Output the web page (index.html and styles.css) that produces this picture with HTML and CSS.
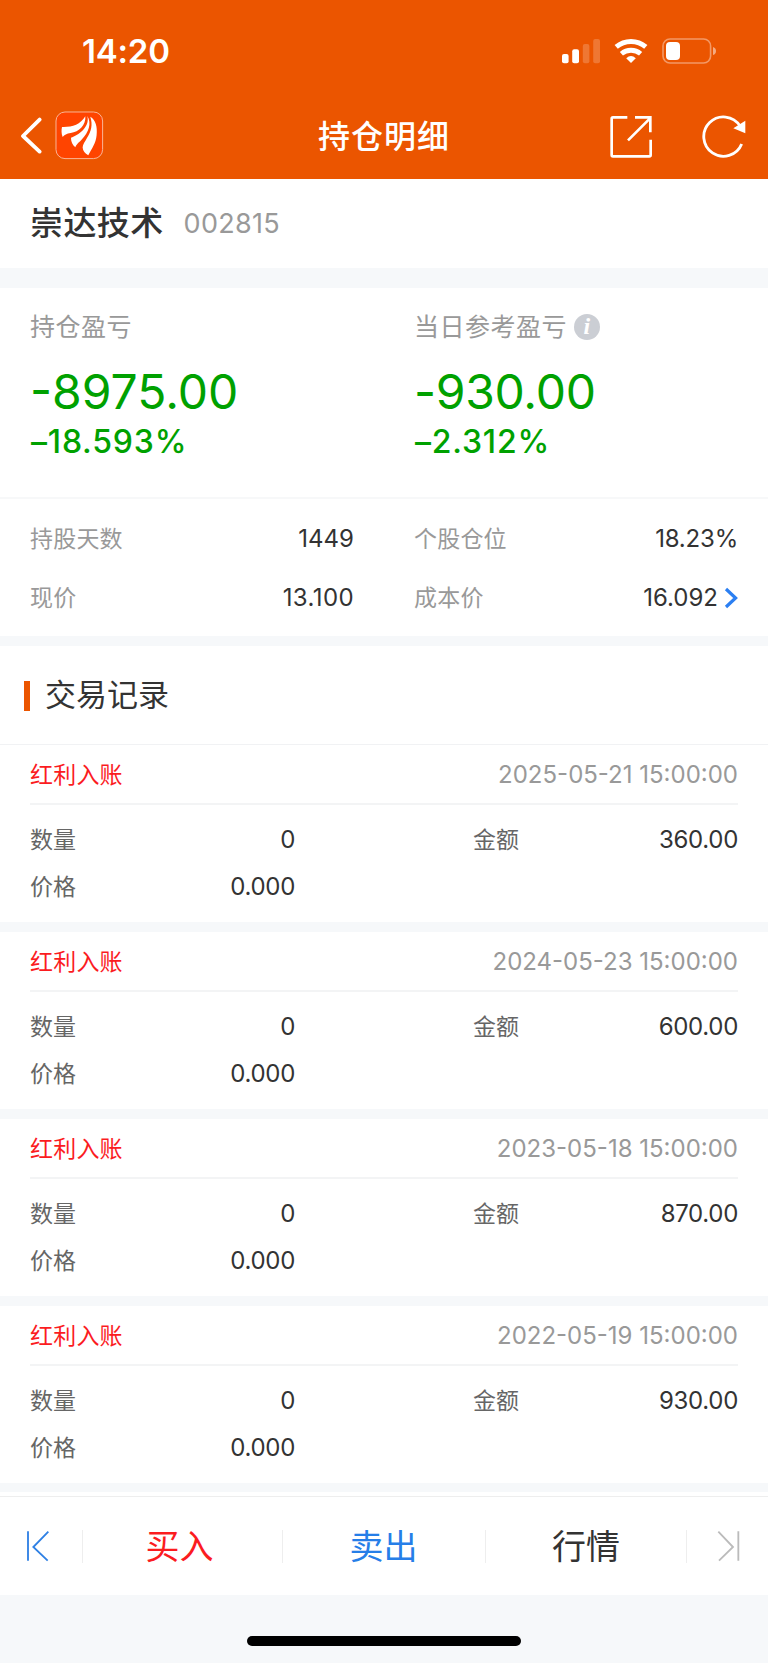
FILE: index.html
```html
<!DOCTYPE html>
<html lang="zh-CN">
<head>
<meta charset="utf-8">
<title>持仓明细</title>
<link rel="stylesheet" href="styles.css">
</head>
<body>
<div class="screen">
  <header class="header">
    <div class="status">
      <span class="time">14:20</span>
      <svg class="status-icons" viewBox="562 36 156 30" width="156" height="30" fill="#fff">
        <rect x="562" y="54" width="6.6" height="9.2" rx="2"/>
        <rect x="572.2" y="49.2" width="6.8" height="14" rx="2"/>
        <rect x="582.8" y="44" width="6.6" height="19.2" rx="2" opacity=".2"/>
        <rect x="593.2" y="39" width="6.8" height="24.2" rx="2" opacity=".2"/>
        <path d="M616.2 46.9A22.9 22.9 0 0 1 645.8 46.9" fill="none" stroke="#fff" stroke-width="5"/>
        <path d="M621.4 53.8A14.7 14.7 0 0 1 640.6 53.8" fill="none" stroke="#fff" stroke-width="4.8"/>
        <path d="M626.2 58.3Q631 53.5 635.8 58.3L631 63.1Z"/>
        <rect x="663" y="39" width="47.6" height="24" rx="7" fill="none" stroke="#fff" stroke-width="1.6" opacity=".4"/>
        <rect x="666" y="42" width="14" height="18" rx="4"/>
        <path d="M713 47v8q3-1 3-4t-3-4Z" opacity=".5"/>
      </svg>
    </div>
    <nav class="nav">
      <div class="nav-side">
        <svg class="back" viewBox="0 0 22 38" width="22" height="38"><path d="M19.6 2.6L3 19l16.6 15.6" fill="none" stroke="#fff" stroke-width="3.8" stroke-linecap="round" stroke-linejoin="round"/></svg>
        <svg class="logo" viewBox="166 333 146 146" width="48.6" height="48.6">
          <rect x="169" y="336" width="140" height="140" rx="27" fill="#ff4400" stroke="#fbb496" stroke-width="3"/>
          <g fill="#fff">
            <path d="M187 381C216 382 242 375 257 349C260 374 238 397 213 399C201 401 194 405 189 411C185 402 185 389 187 381Z"/>
            <path d="M263 348C271 375 246 402 214 413C214 425 219 436 227 442C232 430 240 427 247 418C267 397 277 370 263 348Z"/>
            <path d="M272 350C288 359 294 380 291 406C289 430 277 445 266 466C256 461 250 454 249 443C249 433 257 424 262 414C275 394 280 374 272 350Z"/>
          </g>
        </svg>
      </div>
      <h1 class="nav-title">持仓明细</h1>
      <div class="nav-side nav-right">
        <svg viewBox="675 342 132 135" width="44" height="45" fill="none" stroke="#fff" stroke-width="8">
          <path d="M730 352H687q-4 0-4 4V465q0 4 4 4H796q4 0 4-4V419M753 352H799V397M732 421L798 355"/>
        </svg>
        <svg viewBox="951 342 138 135" width="46" height="45">
          <path d="M1073 432A59 59 0 1 1 1068 378" fill="none" stroke="#fff" stroke-width="8.5"/>
          <path d="M1084 362V400L1048 385Z" fill="#fff"/>
        </svg>
      </div>
    </nav>
  </header>

  <section class="stock"><h2 class="stock-name">崇达技术</h2><span class="stock-code">002815</span></section>

  <section class="summary">
    <div class="pl">
      <div class="pl-label">持仓盈亏</div>
      <div class="pl-value">-8975.00</div>
      <div class="pl-rate">–18.593%</div>
    </div>
    <div class="pl">
      <div class="pl-label">当日参考盈亏<span class="info">i</span></div>
      <div class="pl-value today">-930.00</div>
      <div class="pl-rate">–2.312%</div>
    </div>
  </section>

  <section class="stats">
    <div class="stat"><span class="stat-label">持股天数</span><span class="num">1449</span></div>
    <div class="stat"><span class="stat-label">个股仓位</span><span class="num percent">18.23%</span></div>
    <div class="stat"><span class="stat-label">现价</span><span class="num price">13.100</span></div>
    <div class="stat"><span class="stat-label">成本价</span><span class="num cost">16.092<svg viewBox="0 0 14 22" width="14" height="22"><path d="M2 2l9.6 9L2 20" fill="none" stroke="#2b7ff2" stroke-width="3.2"/></svg></span></div>
  </section>

  <h2 class="section-title">交易记录</h2>

  <main class="records">
    <article class="record">
      <div class="record-head"><span class="type">红利入账</span><time class="date">2025-05-21 15:00:00</time></div>
      <div class="record-body">
        <div class="cell"><span>数量</span><span class="num">0</span></div><div class="cell"><span>金额</span><span class="num">360.00</span></div>
        <div class="cell"><span>价格</span><span class="num">0.000</span></div>
      </div>
    </article>
    <article class="record">
      <div class="record-head"><span class="type">红利入账</span><time class="date">2024-05-23 15:00:00</time></div>
      <div class="record-body">
        <div class="cell"><span>数量</span><span class="num">0</span></div><div class="cell"><span>金额</span><span class="num">600.00</span></div>
        <div class="cell"><span>价格</span><span class="num">0.000</span></div>
      </div>
    </article>
    <article class="record">
      <div class="record-head"><span class="type">红利入账</span><time class="date">2023-05-18 15:00:00</time></div>
      <div class="record-body">
        <div class="cell"><span>数量</span><span class="num">0</span></div><div class="cell"><span>金额</span><span class="num">870.00</span></div>
        <div class="cell"><span>价格</span><span class="num">0.000</span></div>
      </div>
    </article>
    <article class="record">
      <div class="record-head"><span class="type">红利入账</span><time class="date">2022-05-19 15:00:00</time></div>
      <div class="record-body">
        <div class="cell"><span>数量</span><span class="num">0</span></div><div class="cell"><span>金额</span><span class="num">930.00</span></div>
        <div class="cell"><span>价格</span><span class="num">0.000</span></div>
      </div>
    </article>
  </main>

  <footer class="actions">
    <div class="action"><svg class="first" viewBox="80 208 72 96" width="24" height="32" fill="none" stroke="#2f80e4" stroke-width="5.5"><path d="M86 212V300M147 213L102 259L145 300"/></svg></div>
    <div class="action buy">买入</div>
    <div class="action sell">卖出</div>
    <div class="action">行情</div>
    <div class="action"><svg class="last" viewBox="999 208 72 96" width="24" height="32" fill="none" stroke="#bbb" stroke-width="5.5"><path d="M1063 212V300M1003 213L1047 259L1005 300"/></svg></div>
  </footer>
  <div class="home"><div class="home-bar"></div></div>
</div>
</body>
</html>
```
FILE: styles.css
```css
* { box-sizing: border-box; }
body {
  margin: 0;
  background: #f6f8fa;
  font-family: Inter, "Noto Sans CJK SC", sans-serif;
  line-height: 30px;
  color: #333;
}
h1, h2 { margin: 0; font-weight: 500; }
svg { display: block; flex: none; }
.screen { width: 768px; height: 1663px; overflow: hidden; }

.header { height: 179px; background: #eb5500; color: #fff; }
.status { height: 94px; padding: 8px 50px 0 82px; display: flex; align-items: center; justify-content: space-between; }
.time { font-size: 33px; font-weight: 600; line-height: 40px; letter-spacing: -.2px; }
.nav { height: 83px; padding: 0 20px; display: grid; grid-template-columns: 1fr auto 1fr; align-items: center; }
.nav-side { display: flex; align-items: center; }
.back { margin-right: 13px; }
.nav-title { font-size: 32px; letter-spacing: 1px; line-height: 40px; margin-top: 3px; }
.nav-right { justify-content: flex-end; gap: 48px; margin: 2px 1px 0 0; }

.stock { height: 89px; padding: 0 30px; background: #fff; display: flex; align-items: center; }
.stock-name { font-size: 33px; letter-spacing: .4px; line-height: 40px; margin-top: -1px; }
.stock-code { margin: 1px 0 0 20px; font-size: 27px; letter-spacing: .3px; color: #999; }

.summary { margin-top: 20px; height: 211px; padding: 24px 30px 0; background: #fff; border-bottom: 2px solid #f7f8f9; display: grid; grid-template-columns: 384px 1fr; }
.pl-label { height: 30px; font-size: 25px; letter-spacing: .5px; line-height: 30px; color: #999; display: flex; align-items: center; }
.info { width: 26px; height: 26px; margin-left: 7px; border-radius: 50%; background: #cbced4; color: #fff; font: italic bold 24px/25px "Liberation Serif", serif; text-align: center; }
.pl-value { margin-top: 22px; font-size: 48px; line-height: 56px; color: #00a100; }
.today { letter-spacing: -.3px; }
.pl-rate { margin-top: 4px; padding-left: 1px; font-size: 32px; font-weight: 500; letter-spacing: .8px; line-height: 36px; color: #00a100; }

.stats { height: 137px; padding: 10px 30px 0; background: #fff; display: grid; grid-template-columns: 324px 324px; column-gap: 60px; grid-auto-rows: 59px; }
.stat, .cell, .record-head { padding-top: 1px; display: flex; align-items: center; justify-content: space-between; }
.stat-label { color: #999; font-size: 23px; letter-spacing: .2px; }
.num { color: #333; font-size: 24px; }
.percent { letter-spacing: -.2px; }
.price { letter-spacing: .4px; }
.cost { display: flex; align-items: center; gap: 6px; }

.section-title { margin-top: 10px; height: 99px; padding-left: 24px; background: #fff; border-bottom: 1px solid #f1f2f4; display: flex; align-items: center; font-size: 31px; font-weight: 400; line-height: 40px; }
.section-title::before { content: ""; width: 6px; height: 30px; margin: 1px 15px 0 0; background: #eb5500; }

.records { display: flex; flex-direction: column; gap: 10px; }
.record { height: 177px; padding: 0 30px; background: #fff; }
.record-head { height: 60px; border-bottom: 2px solid #f3f4f5; font-size: 23px; letter-spacing: .2px; }
.type { color: #fb1c1f; }
.date { color: #999; font-size: 24px; letter-spacing: 0; }
.record-body { padding-top: 11px; display: grid; grid-template-columns: 265px 265px; justify-content: space-between; grid-auto-rows: 47px; }
.cell { font-size: 23px; color: #666; }
.cell .num { letter-spacing: -.3px; }

.actions { margin-top: 13px; height: 99px; background: #fff; border-top: 1px solid #eee; box-shadow: 0 -4px #fff; display: grid; grid-template-columns: 83px 200px 203px 201px 81px; align-items: center; }
.action { height: 33px; display: flex; align-items: center; justify-content: center; font-size: 34px; line-height: 43px; border-right: 1px solid #eee; }
.action:last-child { border-right: 0; }
.buy { color: #fb1c1f; padding-right: 6px; }
.sell { color: #267ee8; padding-right: 1px; }
.first { margin-right: 7px; }
.last { margin-left: 3px; }
.home { height: 68px; display: flex; justify-content: center; padding-top: 41px; }
.home-bar { width: 274px; height: 10px; border-radius: 5px; background: #000; }
```
